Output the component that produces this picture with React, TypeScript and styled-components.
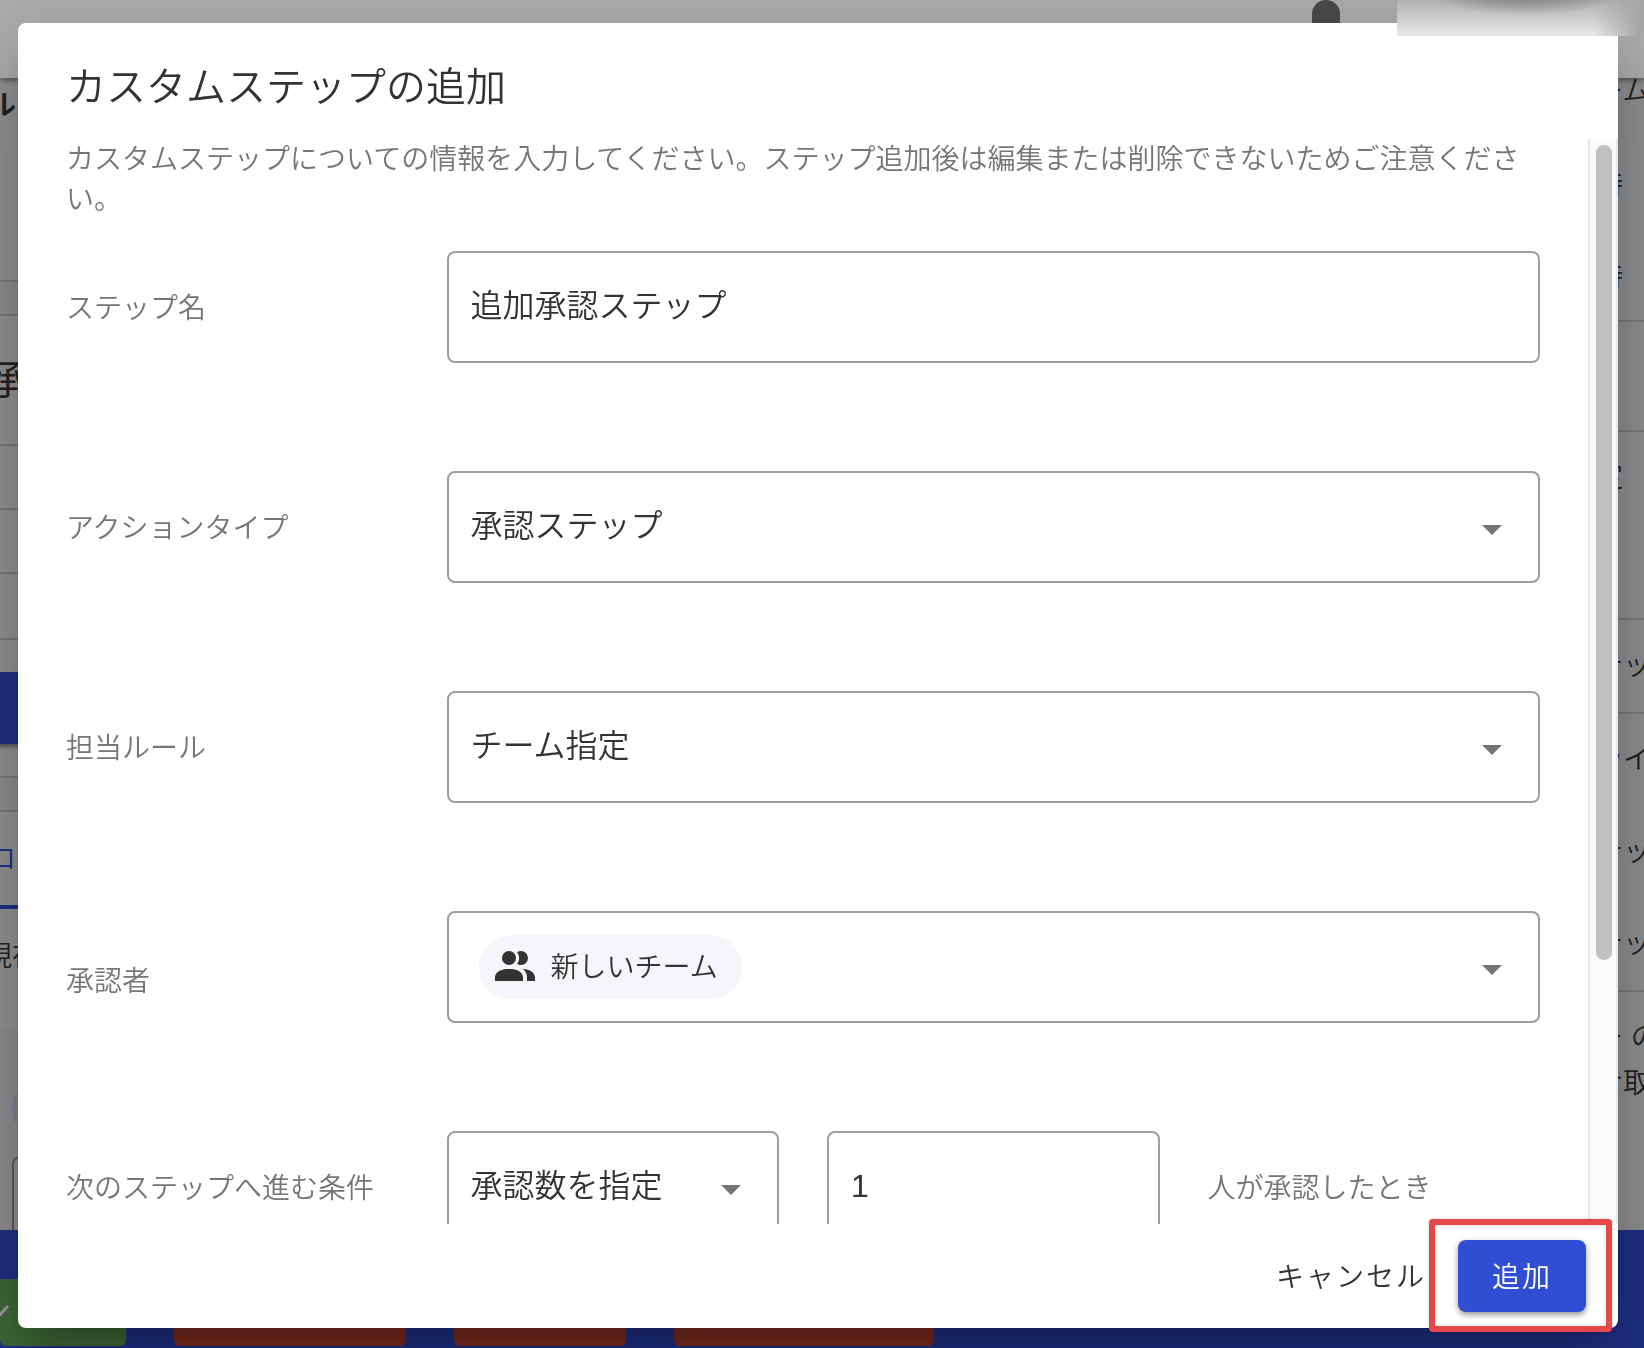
import React from "react";
import styled, { createGlobalStyle } from "styled-components";

const fontStack = '"Liberation Sans", "Noto Sans CJK JP", sans-serif';

const color = {
  text: "#333333",
  muted: "#767676",
  outline: "#9e9e9e",
  primary: "#304ed3",
  chip: "#f5f6fa",
  highlight: "#e5484b",
  pageBlue: "#2c46c4",
  pagePanel: "#dadada",
  pageTint: "#d4d5d9",
  pageLine: "#b4b4b4",
};

const GlobalStyle = createGlobalStyle`
  *, *::before, *::after { box-sizing: border-box; }
  body { margin: 0; overflow: hidden; }
  body, button, input, select {
    font-family: ${fontStack};
    font-weight: 350;
    color: ${color.text};
  }
`;

/* ---------- page behind the dialog ---------- */

const Page = styled.div`
  display: flex;
  flex-direction: column;
  height: 100vh;
  overflow: hidden;
  background: ${color.pagePanel};
`;

const AppBar = styled.header`
  flex: none;
  display: flex;
  justify-content: flex-end;
  height: 78px;
  padding-right: 304px;
  background: #ffffff;
  box-shadow: 0 2px 6px rgba(0, 0, 0, 0.5);
  z-index: 1;
`;

const AppBarHandle = styled.span`
  width: 28px;
  height: 56px;
  border-radius: 14px;
  background: #6c6c6c;
`;

const Columns = styled.div`
  flex: 1;
  min-height: 0;
  display: flex;
  justify-content: space-between;
  overflow: hidden;
`;

const LeftColumn = styled.aside`
  width: 88px;
  margin-left: -24px;
  white-space: nowrap;
  overflow: hidden;
`;

const RightColumn = styled.aside`
  width: 49px;
  background: ${color.pageTint};
  white-space: nowrap;
  overflow: hidden;
`;

const Block = styled.div<{
  $height: number;
  $tint?: boolean;
  $line?: boolean;
  $tight?: boolean;
  $top?: number;
  $indent?: number;
}>`
  height: ${(p) => p.$height}px;
  padding-top: ${(p) => p.$top ?? 0}px;
  padding-left: ${(p) => p.$indent ?? 0}px;
  background: ${(p) => (p.$tint ? color.pageTint : "transparent")};
  border-bottom: ${(p) => (p.$line ? `2px solid ${color.pageLine}` : "none")};
  font-size: 28px;
  line-height: ${(p) => (p.$tight ? 28 : 40)}px;
`;

const PageHeading = styled.span<{ $large?: boolean }>`
  font-size: ${(p) => (p.$large ? 40 : 28)}px;
  font-weight: ${(p) => (p.$large ? 400 : 700)};
`;

const PageButton = styled.div`
  height: 72px;
  margin: 32px 0;
  background: ${color.pageBlue};
  box-shadow: 0 3px 4px rgba(0, 0, 0, 0.4);
`;

const Tab = styled.div`
  height: 97px;
  padding: 28px 0 0 12px;
  border-bottom: 4px solid ${color.pageBlue};
  color: ${color.pageBlue};
  font-size: 28px;
  line-height: 40px;
`;

const Comments = styled.div`
  display: flex;
  flex-direction: column;
  gap: 15px;
  height: 202px;
  padding: 48px 0 0 36px;
  background: ${color.pageTint};
`;

const Avatar = styled.span`
  flex: none;
  width: 64px;
  height: 64px;
  border-radius: 50%;
  background: #c0c4da;
`;

const CommentBox = styled.div`
  flex: 1;
  border: 2px solid #8c8c8c;
  border-bottom: 0;
  border-radius: 8px 0 0 0;
  background: ${color.pagePanel};
`;

const ActionBar = styled.footer`
  flex: none;
  display: flex;
  align-items: stretch;
  gap: 48px;
  height: 118px;
  padding: 49px 0 2px;
  background: ${color.pageBlue};
`;

const ActionTile = styled.span<{ $tone: "green" | "red"; $width: number }>`
  display: flex;
  align-items: center;
  width: ${(p) => p.$width}px;
  border-radius: 0 0 6px 6px;
  background: ${(p) => (p.$tone === "green" ? "#5c9a50" : "#b8402f")};
`;

/* ---------- dialog ---------- */

const Overlay = styled.div`
  position: fixed;
  inset: 0;
  z-index: 2;
  display: flex;
  padding: 23px 26px 20px 18px;
  background: rgba(0, 0, 0, 0.32);
`;

const Dialog = styled.section`
  flex: 1;
  min-width: 0;
  display: flex;
  flex-direction: column;
  border-radius: 8px;
  background: #ffffff;
  box-shadow:
    0 22px 30px -14px rgba(0, 0, 0, 0.2),
    0 48px 76px 6px rgba(0, 0, 0, 0.14),
    0 18px 92px 16px rgba(0, 0, 0, 0.12);
`;

const Title = styled.h2`
  margin: 0;
  padding: 32px 48px 20px;
  font-size: 40px;
  font-weight: inherit;
  line-height: 64px;
`;

const Body = styled.div`
  flex: 1;
  min-height: 0;
  display: flex;
`;

const ScrollArea = styled.div`
  flex: 1;
  min-width: 0;
  padding: 1px 48px 96px;
  overflow-y: auto;
  scrollbar-width: none;
`;

const ScrollTrack = styled.div`
  width: 30px;
  padding: 6px 4px 6px 6px;
  border: solid #e8e8e8;
  border-width: 0 2px;
  background: #fafafa;
`;

const ScrollThumb = styled.div`
  width: 16px;
  height: 76%;
  border-radius: 8px;
  background: #c1c1c1;
`;

const Description = styled.p`
  margin: 0 0 31px;
  color: ${color.muted};
  font-size: 28px;
  line-height: 40px;
`;

const Form = styled.form`
  display: flex;
  flex-direction: column;
  gap: 108px;
`;

const FieldRow = styled.div`
  display: grid;
  grid-template-columns: repeat(4, minmax(0, 1fr));
  column-gap: 48px;
  align-items: center;
`;

const Label = styled.label<{ $low?: boolean }>`
  padding-top: ${(p) => (p.$low ? 30 : 4)}px;
  color: ${color.muted};
  font-size: 28px;
  line-height: 40px;
  white-space: nowrap;
`;

const Control = styled.div<{ $wide?: boolean }>`
  position: relative;
  grid-column: ${(p) => (p.$wide ? "span 3" : "span 1")};
`;

const outlined = `
  display: block;
  width: 100%;
  height: 112px;
  margin: 0;
  padding: 0 22px 2px;
  border: 2px solid ${color.outline};
  border-radius: 8px;
  background: #ffffff;
  font-size: 32px;
  line-height: 48px;
  outline: none;
`;

const TextInput = styled.input<{ $numeric?: boolean }>`
  ${outlined}
  padding-bottom: ${(p) => (p.$numeric ? 2 : 8)}px;
`;

const Select = styled.select`
  ${outlined}
  appearance: none;
`;

const ChipSelect = styled.button`
  ${outlined}
  display: flex;
  align-items: center;
  padding: 0 30px;
`;

const Chip = styled.span`
  display: flex;
  align-items: center;
  gap: 12px;
  height: 64px;
  padding: 0 24px 0 12px;
  border-radius: 32px;
  background: ${color.chip};
  font-size: 28px;
  line-height: 40px;
`;

const ChipText = styled.span`
  padding-top: 2px;
`;

const Caret = styled.svg`
  position: absolute;
  top: 54px;
  right: 38px;
  width: 20px;
  height: 10px;
  fill: #757575;
  pointer-events: none;
`;

const Actions = styled.footer`
  display: flex;
  justify-content: flex-end;
  gap: 16px;
  padding: 16px 32px;
`;

const Button = styled.button<{ $primary?: boolean }>`
  min-width: 128px;
  height: 72px;
  padding: 4px 16px 0;
  border: 0;
  border-radius: 8px;
  background: ${(p) => (p.$primary ? color.primary : "transparent")};
  color: ${(p) => (p.$primary ? "#ffffff" : color.text)};
  box-shadow: ${(p) =>
    p.$primary ? "0 3px 5px rgba(0,0,0,.3), 0 2px 10px rgba(0,0,0,.14)" : "none"};
  font-size: 28px;
  line-height: 40px;
  letter-spacing: 2px;
`;

const Highlighted = styled.div`
  position: relative;

  &::after {
    content: "";
    position: absolute;
    inset: -21px -26px -20px -29px;
    border: 6px solid ${color.highlight};
    border-radius: 4px;
    box-shadow: 0 0 3px rgba(0, 0, 0, 0.2), inset 0 0 3px rgba(0, 0, 0, 0.2);
    pointer-events: none;
  }
`;

const BlurPatch = styled.div`
  position: fixed;
  top: 0;
  right: 0;
  z-index: 3;
  width: 247px;
  height: 36px;
  background:
    linear-gradient(90deg, rgba(166, 166, 166, 0) 80%, #a6a6a6 98%),
    radial-gradient(ellipse 100px 28px at 52% -12px, #6e6e6e, rgba(150, 150, 150, 0)),
    linear-gradient(#b0b0b0, #e8e8e8);
`;

const DropCaret = () => (
  <Caret viewBox="0 0 20 10" aria-hidden="true">
    <path d="M0 0h20L10 10z" />
  </Caret>
);

const PeopleIcon = () => (
  <svg width="48" height="48" viewBox="0 0 24 24" fill={color.text} aria-hidden="true">
    <path d="M16 17V19H2V17S2 13 9 13 16 17 16 17M12.5 7.5A3.5 3.5 0 1 0 9 11A3.5 3.5 0 0 0 12.5 7.5M15.94 13A5.32 5.32 0 0 1 18 17V19H22V17S22 13.37 15.94 13M15 4A3.39 3.39 0 0 0 13.07 4.59A5 5 0 0 1 13.07 10.41A3.39 3.39 0 0 0 15 11A3.5 3.5 0 0 0 15 4Z" />
  </svg>
);

const CheckIcon = () => (
  <svg width="12" height="16" viewBox="0 0 12 16" fill="none" stroke="#e6e6e6" strokeWidth="3">
    <path d="M-2 12L8 1" />
  </svg>
);

const BackgroundPage = () => (
  <Page aria-hidden="true">
    <AppBar>
      <AppBarHandle />
    </AppBar>
    <Columns>
      <LeftColumn>
        <Block $height={204} $line $top={8} $indent={12}>
          <PageHeading>ル</PageHeading>
        </Block>
        <Block $height={34} $tint $line />
        <Block $height={130} $line $top={44} $indent={12}>
          <PageHeading $large>承認</PageHeading>
        </Block>
        <Block $height={64} $line />
        <Block $height={64} $line />
        <Block $height={66} $line />
        <PageButton />
        <Block $height={2} $line />
        <Block $height={34} $tint $line />
        <Tab>ログ</Tab>
        <Block $height={120} $top={28} $indent={8}>
          現在
        </Block>
        <Comments>
          <Avatar />
          <CommentBox />
        </Comments>
      </LeftColumn>
      <RightColumn>
        <Block $height={88} $tight>
          ーム
        </Block>
        <Block $height={92}>時</Block>
        <Block $height={64} $line>
          時
        </Block>
        <Block $height={110} $line />
        <Block $height={188} $top={26} $line>
          定
        </Block>
        <Block $height={94} $top={26} $line>
          テップ
        </Block>
        <Block $height={92} $top={26}>
          ライ
        </Block>
        <Block $height={92} $top={26}>
          テップ
        </Block>
        <Block $height={94} $top={26} $line>
          テップ
        </Block>
        <Block $height={72} $top={26}>
          ー の
        </Block>
        <Block $height={60}>け取</Block>
      </RightColumn>
    </Columns>
    <ActionBar>
      <ActionTile $tone="green" $width={126}>
        <CheckIcon />
      </ActionTile>
      <ActionTile $tone="red" $width={232} />
      <ActionTile $tone="red" $width={172} />
      <ActionTile $tone="red" $width={260} />
    </ActionBar>
  </Page>
);

export default function App() {
  return (
    <>
      <GlobalStyle />
      <BackgroundPage />
      <Overlay>
        <Dialog role="dialog" aria-modal="true" aria-labelledby="dialog-title">
          <Title id="dialog-title">カスタムステップの追加</Title>
          <Body>
            <ScrollArea>
              <Description>
                カスタムステップについての情報を入力してください。ステップ追加後は編集または削除できないためご注意ください。
              </Description>
              <Form id="step-form" onSubmit={(e) => e.preventDefault()}>
                <FieldRow>
                  <Label htmlFor="step-name">ステップ名</Label>
                  <Control $wide>
                    <TextInput id="step-name" defaultValue="追加承認ステップ" />
                  </Control>
                </FieldRow>
                <FieldRow>
                  <Label htmlFor="action-type">アクションタイプ</Label>
                  <Control $wide>
                    <Select id="action-type">
                      <option>承認ステップ</option>
                    </Select>
                    <DropCaret />
                  </Control>
                </FieldRow>
                <FieldRow>
                  <Label htmlFor="assign-rule">担当ルール</Label>
                  <Control $wide>
                    <Select id="assign-rule">
                      <option>チーム指定</option>
                    </Select>
                    <DropCaret />
                  </Control>
                </FieldRow>
                <FieldRow>
                  <Label htmlFor="approver" $low>
                    承認者
                  </Label>
                  <Control $wide>
                    <ChipSelect id="approver" type="button" aria-haspopup="listbox">
                      <Chip>
                        <PeopleIcon />
                        <ChipText>新しいチーム</ChipText>
                      </Chip>
                    </ChipSelect>
                    <DropCaret />
                  </Control>
                </FieldRow>
                <FieldRow>
                  <Label htmlFor="condition">次のステップへ進む条件</Label>
                  <Control>
                    <Select id="condition">
                      <option>承認数を指定</option>
                    </Select>
                    <DropCaret />
                  </Control>
                  <Control>
                    <TextInput id="approval-count" inputMode="numeric" defaultValue="1" $numeric />
                  </Control>
                  <Label htmlFor="approval-count">人が承認したとき</Label>
                </FieldRow>
              </Form>
            </ScrollArea>
            <ScrollTrack>
              <ScrollThumb />
            </ScrollTrack>
          </Body>
          <Actions>
            <Button type="button">キャンセル</Button>
            <Highlighted>
              <Button type="submit" form="step-form" $primary>
                追加
              </Button>
            </Highlighted>
          </Actions>
        </Dialog>
      </Overlay>
      <BlurPatch />
    </>
  );
}
